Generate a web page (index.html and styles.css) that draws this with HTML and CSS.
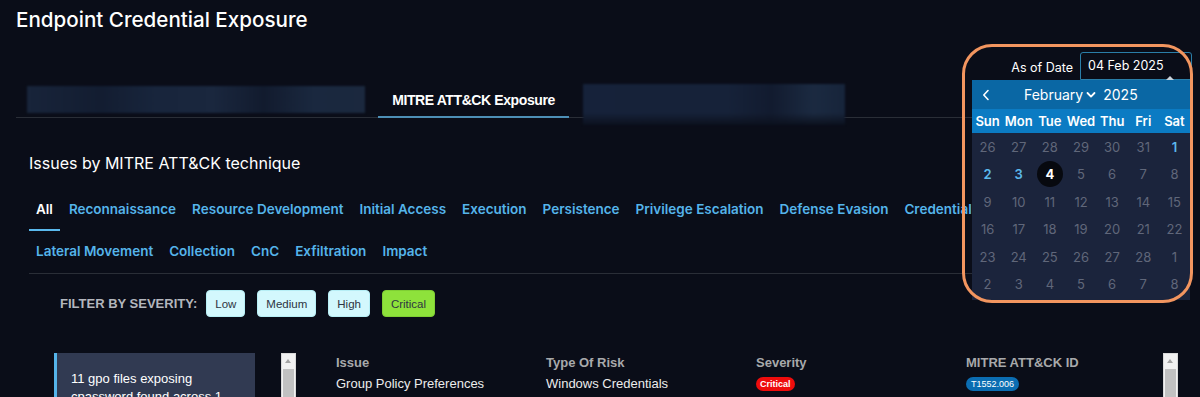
FILE: index.html
```html
<!DOCTYPE html>
<html lang="en">
<head>
<meta charset="utf-8">
<title>Endpoint Credential Exposure</title>
<link rel="stylesheet" href="styles.css">
</head>
<body>
<div class="page">
  <h1 class="title">Endpoint Credential Exposure</h1>

  <div class="date-row">
    <div class="date-field">
      <span class="date-label">As of Date</span>
      <div class="date-input">04 Feb 2025<span class="caret"></span></div>
      <div class="calendar">
        <div class="cal-head">
          <svg class="cal-prev" width="8" height="12" viewBox="0 0 8 12"><polyline points="6,1.5 1.8,6 6,10.5" fill="none" stroke="#fff" stroke-width="1.6" stroke-linecap="round" stroke-linejoin="round"/></svg>
          <span class="cal-month">February</span>
          <svg class="cal-chev" width="10" height="8" viewBox="0 0 10 8"><polyline points="1.5,2 5,5.6 8.5,2" fill="none" stroke="#fff" stroke-width="1.8" stroke-linecap="round" stroke-linejoin="round"/></svg>
          <span class="cal-year">2025</span>
        </div>
        <div class="cal-days">
          <span>Sun</span><span>Mon</span><span>Tue</span><span>Wed</span><span>Thu</span><span>Fri</span><span>Sat</span>
        </div>
        <div class="cal-grid">
          <span>26</span><span>27</span><span>28</span><span>29</span><span>30</span><span>31</span><span class="on">1</span>
          <span class="on">2</span><span class="on">3</span><span class="sel"><b>4</b></span><span>5</span><span>6</span><span>7</span><span>8</span>
          <span>9</span><span>10</span><span>11</span><span>12</span><span>13</span><span>14</span><span>15</span>
          <span>16</span><span>17</span><span>18</span><span>19</span><span>20</span><span>21</span><span>22</span>
          <span>23</span><span>24</span><span>25</span><span>26</span><span>27</span><span>28</span><span>1</span>
          <span>2</span><span>3</span><span>4</span><span>5</span><span>6</span><span>7</span><span>8</span>
        </div>
      </div>
    </div>
  </div>

  <div class="top-tabs">
    <div class="blur blur-a"></div>
    <div class="top-tab active">MITRE ATT&amp;CK Exposure</div>
    <div class="blur blur-b"></div>
  </div>

  <section class="issues">
    <h2 class="issues-title">Issues by MITRE ATT&amp;CK technique</h2>
    <nav class="tactics">
      <span class="tactic active">All</span>
      <span class="tactic">Reconnaissance</span>
      <span class="tactic">Resource Development</span>
      <span class="tactic">Initial Access</span>
      <span class="tactic">Execution</span>
      <span class="tactic">Persistence</span>
      <span class="tactic">Privilege Escalation</span>
      <span class="tactic">Defense Evasion</span>
      <span class="tactic">Credential Access</span>
      <span class="tactic">Discovery</span>
      <span class="tactic">Lateral Movement</span>
      <span class="tactic">Collection</span>
      <span class="tactic">CnC</span>
      <span class="tactic">Exfiltration</span>
      <span class="tactic">Impact</span>
    </nav>

    <div class="filter">
      <span class="filter-label">FILTER BY SEVERITY:</span>
      <button class="sev">Low</button>
      <button class="sev">Medium</button>
      <button class="sev">High</button>
      <button class="sev sev-critical">Critical</button>
    </div>

    <div class="results">
      <div class="issue-card">11 gpo files exposing cpassword found across 1 domain</div>
      <div class="scrollbar scrollbar-list"><span class="sb-arrow"></span><span class="sb-thumb"></span></div>
      <div class="table">
        <div class="th">Issue</div>
        <div class="th">Type Of Risk</div>
        <div class="th">Severity</div>
        <div class="th">MITRE ATT&amp;CK ID</div>
        <div class="td">Group Policy Preferences (cpassword) exposed in</div>
        <div class="td">Windows Credentials</div>
        <div class="td"><span class="pill pill-red">Critical</span></div>
        <div class="td"><span class="pill pill-blue">T1552.006</span></div>
      </div>
      <div class="scrollbar"><span class="sb-arrow"></span><span class="sb-thumb"></span></div>
    </div>
  </section>

  <div class="highlight"></div>
</div>
</body>
</html>
```

FILE: styles.css
```css
* { box-sizing: border-box; }

html, body {
  margin: 0;
  padding: 0;
  background: #0a0d18;
}

body {
  font-family: Inter, "Liberation Sans", sans-serif;
  color: #ffffff;
  width: 1200px;
  height: 397px;
  overflow: hidden;
}

.page {
  position: relative;
  width: 1200px;
  height: 397px;
  overflow: hidden;
}

/* Title */
.title {
  margin: 0;
  padding: 8px 16px;
  font-size: 20.6px;
  line-height: 24px;
  font-weight: 500;
  color: #ffffff;
}

/* As-of-date control */
.date-row {
  display: flex;
  justify-content: flex-end;
  margin-top: 12px;
  padding-right: 8px;
  height: 28px;
}

.date-field {
  position: relative;
  display: flex;
  align-items: center;
  gap: 7px;
}

.date-label {
  font-size: 12.5px;
  color: #ffffff;
  padding-top: 2px;
}

.date-input {
  position: relative;
  width: 112px;
  height: 28px;
  border: 1px solid #2a7ea8;
  border-radius: 3px 3px 0 0;
  padding-left: 7px;
  font-size: 12.5px;
  font-weight: 400;
  line-height: 26px;
  color: #ffffff;
}

.caret {
  position: absolute;
  right: 17px;
  bottom: -1px;
  width: 0;
  height: 0;
  border-left: 4px solid transparent;
  border-right: 4px solid transparent;
  border-bottom: 4px solid #c9d3dc;
}

/* Calendar popup */
.calendar {
  position: absolute;
  top: 28px;
  right: 2px;
  width: 218px;
  height: 220px;
  background: #1b243c;
  z-index: 5;
}

.cal-head {
  display: flex;
  align-items: center;
  height: 29px;
  background: #0a67a4;
  font-size: 14px;
  color: #ffffff;
}

.cal-prev { margin-left: 10px; }
.cal-month { margin-left: 34px; }
.cal-chev { margin-left: 3px; }
.cal-year { margin-left: 7px; }

.cal-days {
  display: grid;
  grid-template-columns: repeat(7, 1fr);
  height: 24px;
  background: #0b7bc3;
  font-size: 13px;
  font-weight: 600;
  line-height: 24px;
  text-align: center;
  color: #ffffff;
}

.cal-grid {
  display: grid;
  grid-template-columns: repeat(7, 1fr);
  grid-auto-rows: 27.5px;
  font-size: 13px;
  text-align: center;
  color: #60677a;
}

.cal-grid span {
  display: flex;
  align-items: center;
  justify-content: center;
}

.cal-grid .on {
  color: #5cb9ec;
  font-weight: 600;
}

.cal-grid .sel b {
  display: flex;
  align-items: center;
  justify-content: center;
  width: 26px;
  height: 26px;
  border-radius: 50%;
  background: #07090f;
  color: #ffffff;
  font-weight: 700;
}

/* Top tabs */
.top-tabs {
  display: flex;
  align-items: flex-start;
  margin: 4px 16px 0;
  height: 34px;
  border-bottom: 1px solid #2a2e37;
}

.blur {
  flex: none;
  filter: blur(1px);
}

.blur-a {
  margin-left: 11px;
  margin-top: 2px;
  width: 338px;
  height: 27px;
  background: linear-gradient(90deg, #18243a 0%, #131d31 22%, #18253c 38%, #1a273e 55%, #121b2e 70%, #1a283f 85%, #1b283e 100%);
}

.blur-b {
  margin-left: 14px;
  width: 262px;
  height: 41px;
  background: linear-gradient(180deg, rgba(10,13,24,0) 70%, #0c111e 100%),
              linear-gradient(90deg, #16223a 0%, #162239 55%, #121b2f 72%, #1b2a41 88%, #17243a 100%);
}

.top-tab {
  flex: none;
  margin-left: 13px;
  width: 191px;
  height: 34px;
  line-height: 32px;
  text-align: center;
  font-family: "Liberation Sans", Arial, sans-serif;
  font-size: 14px;
  font-weight: 700;
  letter-spacing: -0.4px;
  color: #ffffff;
  border-bottom: 2px solid #4d8fb6;
}

/* Issues section */
.issues {
  margin: 35px 16px 0 29px;
}

.issues-title {
  margin: 0;
  font-size: 16px;
  line-height: 20px;
  font-weight: 400;
  color: #ffffff;
}

.tactics {
  display: flex;
  flex-wrap: wrap;
  column-gap: 2px;
  row-gap: 4px;
  margin-top: 20px;
  border-bottom: 1px solid #2a2e37;
}

.tactic {
  padding: 7px 7px 11px;
  line-height: 18px;
  font-size: 13.5px;
  font-weight: 600;
  color: #55b4ea;
  border-bottom: 2px solid transparent;
  white-space: nowrap;
}

.tactic.active {
  color: #ffffff;
  border-bottom-color: #5ab8ec;
}

/* Filter */
.filter {
  display: flex;
  align-items: center;
  gap: 12px;
  margin-top: 16px;
  padding-left: 31px;
  height: 27px;
}

.filter-label {
  margin-right: -3px;
  font-family: "Liberation Sans", Arial, sans-serif;
  font-size: 13px;
  font-weight: 700;
  color: #b3b6bd;
}

.sev {
  height: 27px;
  padding: 0 8px;
  border: 1px solid #b6eef5;
  border-radius: 4px;
  background: #d3f8fd;
  font-family: "Liberation Sans", Arial, sans-serif;
  font-size: 11.5px;
  color: #2e3442;
}

.sev-critical {
  background: #8ee23b;
  border-color: #7fcf33;
}

/* Results */
.results {
  display: flex;
  align-items: flex-start;
  margin-top: 36px;
  margin-left: 25px;
}

.issue-card {
  flex: none;
  width: 201px;
  height: 60px;
  padding: 17px 10px 0 14px;
  background: #313a52;
  border-left: 3px solid #55b4ea;
  font-family: "Liberation Sans", Arial, sans-serif;
  font-size: 13px;
  line-height: 18px;
  color: #ffffff;
}

.scrollbar {
  flex: none;
  position: relative;
  width: 15px;
  height: 60px;
  background: #f1f1f1;
  border: 1px solid #d9d9d9;
}

.scrollbar-list { margin-left: 26px; }

.sb-arrow {
  position: absolute;
  left: 3px;
  top: 5px;
  width: 0;
  height: 0;
  border-left: 3.5px solid transparent;
  border-right: 3.5px solid transparent;
  border-bottom: 4px solid #a3a3a3;
}

.sb-thumb {
  position: absolute;
  left: 1px;
  top: 15px;
  width: 11px;
  height: 60px;
  background: #c1c1c1;
}

.table {
  flex: none;
  display: grid;
  grid-template-columns: 210px 210px 210px 197px;
  margin-left: 40px;
  padding-top: 1px;
  font-family: "Liberation Sans", Arial, sans-serif;
  font-size: 13px;
}

.th {
  height: 19px;
  line-height: 18px;
  font-weight: 700;
  color: #a8a9ab;
}

.td {
  line-height: 18px;
  color: #ececec;
  padding-top: 2px;
}

.pill {
  display: inline-block;
  height: 14px;
  line-height: 14px;
  border-radius: 7px;
  font-size: 9px;
  vertical-align: 1px;
  color: #ffffff;
}

.pill-red {
  padding: 0 4px;
  background: #ee0c0c;
  font-weight: 700;
}

.pill-blue {
  padding: 0 5px;
  background: #0b6db2;
}

/* Annotation highlight around the date picker */
.highlight {
  position: absolute;
  left: 962px;
  top: 44px;
  width: 231px;
  height: 259px;
  border: 3px solid #f2955f;
  border-radius: 30px;
  z-index: 10;
  pointer-events: none;
}
```
